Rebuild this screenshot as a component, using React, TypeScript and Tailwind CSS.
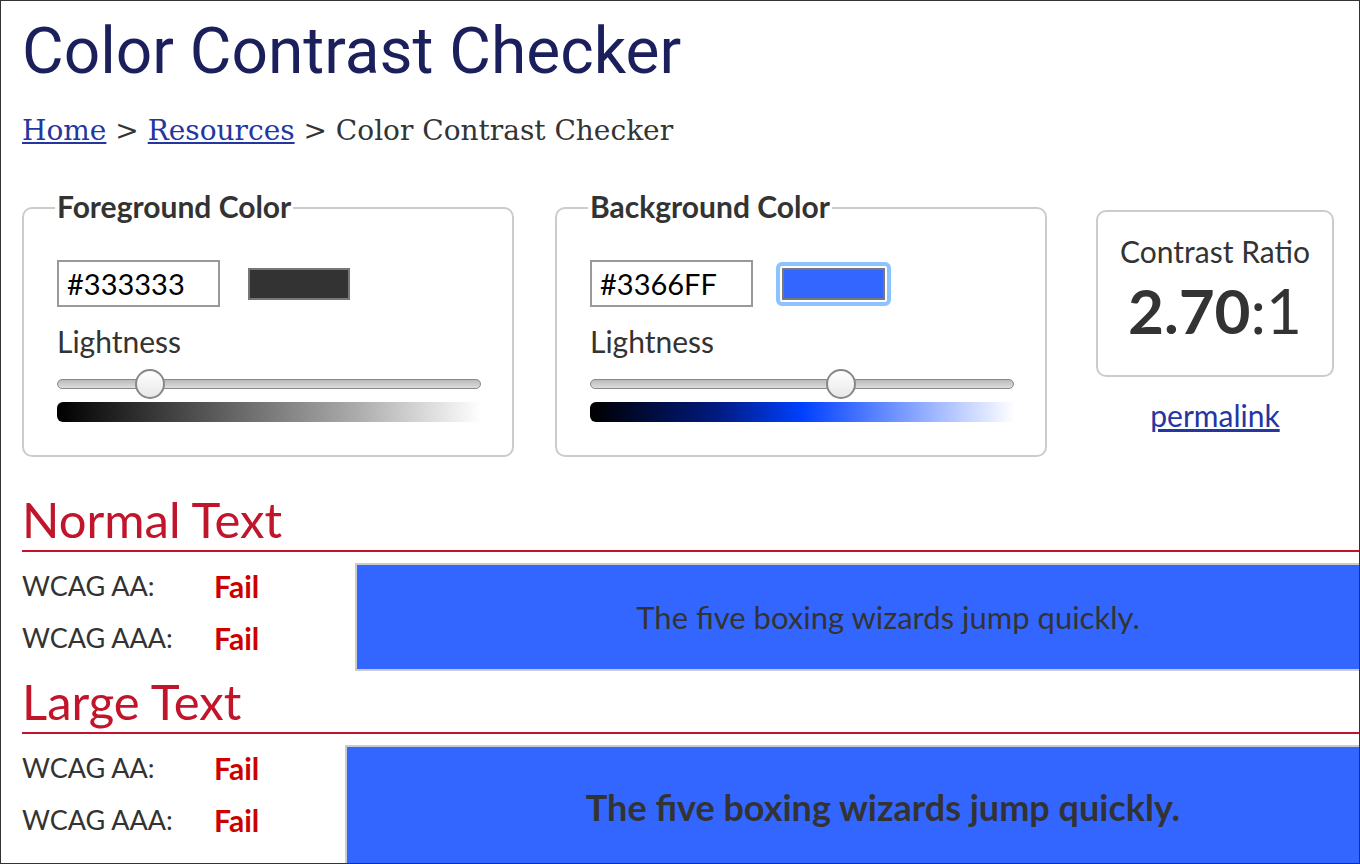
import type { ReactNode } from "react";

const body = { fontFamily: "Lato, 'Noto Sans', sans-serif" };

function Slider({ pos, gradient }: { pos: number; gradient: string }) {
  return (
    <div className="mt-[20px] w-[424px]">
      <div className="relative h-[10px] rounded-full border border-[#888] bg-gradient-to-b from-[#bbb] to-[#ddd]">
        <div
          className="absolute top-1/2 h-[30px] w-[30px] -translate-x-1/2 -translate-y-1/2 rounded-full border-2 border-[#888] bg-gradient-to-b from-white to-[#e8e8e8]"
          style={{ left: pos }}
        />
      </div>
      <div className="mt-[13px] h-[20px] rounded-l-[6px]" style={{ background: gradient }} />
    </div>
  );
}

function ColorBox({
  title,
  hex,
  swatch,
  focused,
  pos,
  gradient,
}: {
  title: string;
  hex: string;
  swatch: string;
  focused?: boolean;
  pos: number;
  gradient: string;
}) {
  return (
    <div className="relative w-[492px] shrink-0 pt-[1px]">
      <div className="mt-[26px] h-[250px] rounded-[10px] border-2 border-[#ccc] px-[33px] pt-[51px]">
        <div className="flex items-center">
          <div className="flex h-[47px] w-[163px] items-center border-2 border-[#999] pl-[8px] text-[29px] text-black">
            {hex}
          </div>
          {focused ? (
            <div className="ml-[23px] rounded-[6px] border-[4px] border-[#8cc2ff] bg-white p-[2px]">
              <div className="h-[32px] w-[103px] border-2 border-[#777]" style={{ background: swatch }} />
            </div>
          ) : (
            <div className="ml-[28px] h-[32px] w-[102px] border-2 border-[#777]" style={{ background: swatch }} />
          )}
        </div>
        <div className="mt-[16px] text-[30px] leading-[36px] text-[#333]">Lightness</div>
        <Slider pos={pos} gradient={gradient} />
      </div>
      <div className="absolute left-[33px] top-[8px] bg-white px-[2px] text-[30px] font-bold leading-[36px] text-[#333]">
        {title}
      </div>
    </div>
  );
}

function Row({ label }: { label: string }) {
  return (
    <div className="flex h-[52px] items-center text-[27px]">
      <span className="w-[192px] text-[#333]">{label}</span>
      <span className="text-[30px] font-bold text-[#cc0000]">Fail</span>
    </div>
  );
}

function Section({ title, children }: { title: string; children: ReactNode }) {
  return (
    <div>
      <div className="border-b-2 border-[#c0152a] pb-[2px] text-[49px] leading-[58px] text-[#c0152a]">{title}</div>
      {children}
    </div>
  );
}

export default function App() {
  return (
    <div
      className="h-[864px] w-[1360px] overflow-hidden border border-[#333] bg-white pl-[21px]"
      style={body}
    >
      <h1
        className="pt-[16px] text-[64px] leading-[70px] text-[#1b1f5c]"
        style={{ fontFamily: "Roboto, sans-serif" }}
      >
        Color Contrast Checker
      </h1>
      <div
        className="mt-[28px] text-[28px] leading-[32px] text-[#333]"
        style={{ fontFamily: "'DejaVu Serif', serif" }}
      >
        <a className="text-[#2436a0] underline">Home</a> &gt;{" "}
        <a className="text-[#2436a0] underline">Resources</a> &gt; Color Contrast Checker
      </div>

      <div className="mt-[33px] flex">
        <ColorBox
          title="Foreground Color"
          hex="#333333"
          swatch="#333333"
          pos={92}
          gradient="linear-gradient(to right, #000, #555 35%, #aaa 70%, #fff)"
        />
        <div className="ml-[41px]">
          <ColorBox
            title="Background Color"
            hex="#3366FF"
            swatch="#3366FF"
            focused
            pos={250}
            gradient="linear-gradient(to right, #000, #001a80 30%, #0040ff 50%, #7f9fff 75%, #fff)"
          />
        </div>
        <div className="ml-[49px] mt-[30px] flex flex-col items-center">
          <div className="flex h-[167px] w-[238px] flex-col items-center rounded-[10px] border-2 border-[#ccc] pt-[20px] text-[#333]">
            <div className="text-[30px] leading-[38px]">Contrast Ratio</div>
            <div className="mt-[8px] text-[62px] leading-[64px]">
              <span className="font-bold">2.70</span>:1
            </div>
          </div>
          <a className="mt-[16px] text-[30px] text-[#2436a0] underline">permalink</a>
        </div>
      </div>

      <div className="mt-[33px]">
        <Section title="Normal Text">
          <div className="flex">
            <div className="w-[333px] shrink-0 pt-[8px]">
              <Row label="WCAG AA:" />
              <Row label="WCAG AAA:" />
            </div>
            <div className="mt-[11px] flex h-[108px] w-[1066px] shrink-0 items-center justify-center border-2 border-[#ccc] bg-[#3366ff] text-[31px] text-[#333]">
              The five boxing wizards jump quickly.
            </div>
          </div>
        </Section>
        <div className="mt-[1px]">
          <Section title="Large Text">
            <div className="flex">
              <div className="w-[323px] shrink-0 pt-[8px]">
                <Row label="WCAG AA:" />
                <Row label="WCAG AAA:" />
              </div>
              <div className="mt-[11px] flex h-[124px] w-[1076px] shrink-0 items-center justify-center border-2 border-[#ccc] bg-[#3366ff] text-[36px] font-bold text-[#333]">
                The five boxing wizards jump quickly.
              </div>
            </div>
          </Section>
        </div>
      </div>
    </div>
  );
}
